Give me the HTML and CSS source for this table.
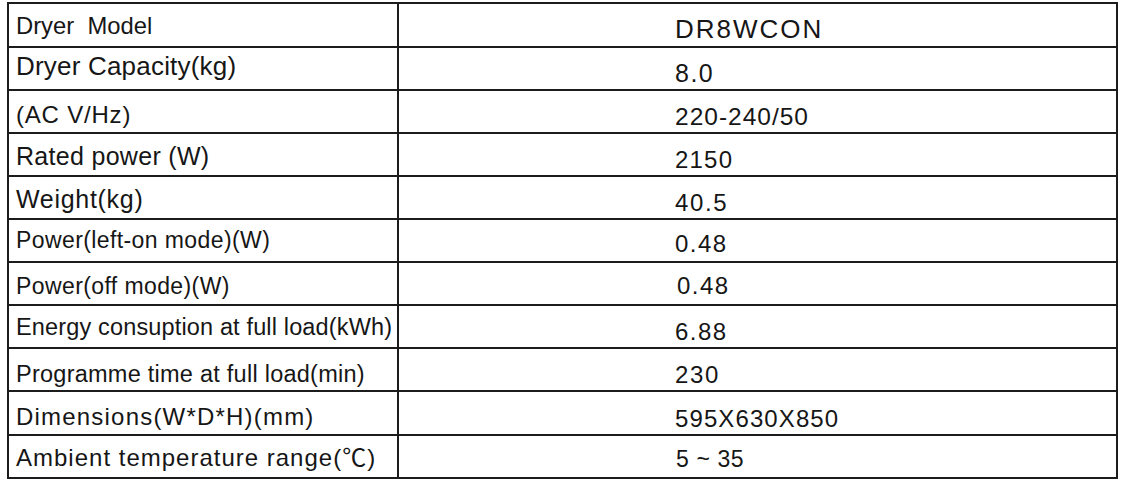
FILE: index.html
```html
<!DOCTYPE html>
<html lang="en">
<head>
<meta charset="utf-8">
<title>Dryer specification</title>
<link rel="stylesheet" href="styles.css">
</head>
<body>
<div class="spec">
  <div class="k r1">Dryer  Model</div><div class="v r1">DR8WCON</div>
  <div class="k r2">Dryer Capacity(kg)</div><div class="v r2">8.0</div>
  <div class="k r3">(AC V/Hz)</div><div class="v r3">220-240/50</div>
  <div class="k r4">Rated power (W)</div><div class="v r4">2150</div>
  <div class="k r5">Weight(kg)</div><div class="v r5">40.5</div>
  <div class="k r6">Power(left-on mode)(W)</div><div class="v r6">0.48</div>
  <div class="k r7">Power(off mode)(W)</div><div class="v r7">0.48</div>
  <div class="k r8">Energy consuption at full load(kWh)</div><div class="v r8">6.88</div>
  <div class="k r9">Programme time at full load(min)</div><div class="v r9">230</div>
  <div class="k r10">Dimensions(W*D*H)(mm)</div><div class="v r10">595X630X850</div>
  <div class="k r11">Ambient temperature range(℃)</div><div class="v r11">5 ~ 35</div>
</div>
</body>
</html>
```

FILE: styles.css
```css
html, body {
  margin: 0;
  padding: 0;
  background: #ffffff;
}

.spec {
  display: grid;
  grid-template-columns: 390px 719px;
  grid-template-rows: 44px repeat(8, 43px) 44px 43px;
  width: max-content;
  margin: 2px 0 0 7px;
  border-top: 2px solid #1c1c1c;
  border-left: 2px solid #1c1c1c;
  font-family: "Liberation Sans", Arial, "Noto Sans CJK SC", sans-serif;
  color: #161616;
}

.k, .v {
  box-sizing: border-box;
  display: flex;
  align-items: flex-end;
  border-right: 2px solid #1c1c1c;
  border-bottom: 2px solid #1c1c1c;
  line-height: 1;
  white-space: pre;
}

.k { padding-left: 7px; }
.v { padding-left: 276px; }

/* row 1 */
.k.r1 { font-size: 23.8px; padding-bottom: 8px; }
.v.r1 { font-size: 26px; letter-spacing: 2px; padding-bottom: 4px; }
/* row 2 */
.k.r2 { font-size: 26px; letter-spacing: 0.2px; padding-bottom: 10px; }
.v.r2 { font-size: 25px; letter-spacing: 1.5px; padding-bottom: 3px; }
/* row 3 */
.k.r3 { font-size: 24px; letter-spacing: 0.8px; padding-bottom: 5px; }
.v.r3 { font-size: 24.5px; letter-spacing: 1px; padding-bottom: 3px; }
/* row 4 */
.k.r4 { font-size: 25px; letter-spacing: 0.3px; padding-bottom: 6px; }
.v.r4 { font-size: 24px; letter-spacing: 1.2px; padding-bottom: 3px; }
/* row 5 */
.k.r5 { font-size: 25px; letter-spacing: 0.7px; padding-bottom: 6px; }
.v.r5 { font-size: 24px; letter-spacing: 1.6px; padding-bottom: 3.3px; }
/* row 6 */
.k.r6 { font-size: 23px; letter-spacing: 0.4px; padding-bottom: 9.4px; }
.v.r6 { font-size: 24px; letter-spacing: 1.5px; padding-bottom: 5.3px; }
/* row 7 */
.k.r7 { font-size: 23px; letter-spacing: 0.4px; padding-bottom: 6.4px; }
.v.r7 { font-size: 24px; letter-spacing: 1.5px; padding-bottom: 6.3px; padding-left: 278px; }
/* row 8 */
.k.r8 { font-size: 23.5px; letter-spacing: 0.15px; padding-bottom: 7.5px; }
.v.r8 { font-size: 24px; letter-spacing: 1.5px; padding-bottom: 3.3px; }
/* row 9 */
.k.r9 { font-size: 23.5px; letter-spacing: 0.25px; padding-bottom: 3.5px; }
.v.r9 { font-size: 24px; letter-spacing: 1.6px; padding-bottom: 3.3px; }
/* row 10 */
.k.r10 { font-size: 24px; letter-spacing: 1.2px; padding-bottom: 5.3px; }
.v.r10 { font-size: 24px; letter-spacing: 1.1px; padding-bottom: 3.3px; }
/* row 11 */
.k.r11 { font-size: 24px; letter-spacing: 1px; padding-bottom: 7.4px; }
.v.r11 { font-size: 23px; letter-spacing: 0.6px; padding-bottom: 6.4px; padding-left: 277px; }
```
